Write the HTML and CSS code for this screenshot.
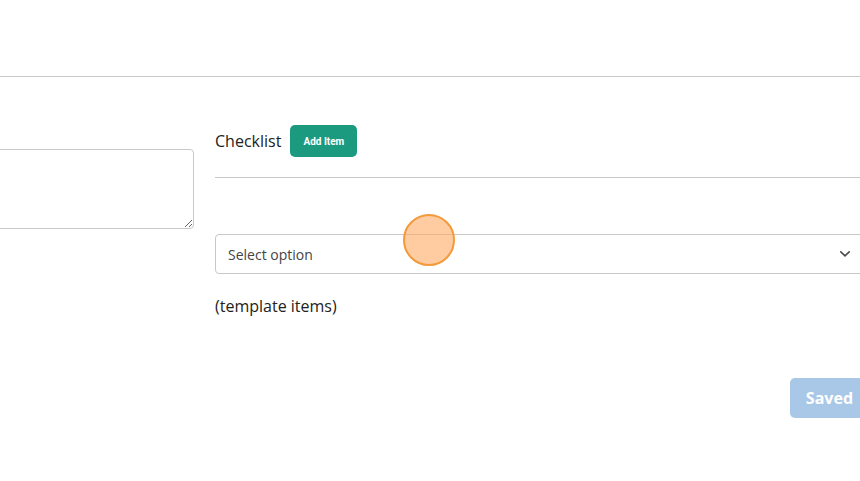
FILE: index.html
```html
<!DOCTYPE html>
<html lang="en">
<head>
    <meta charset="UTF-8">
    <meta name="viewport" content="width=device-width, initial-scale=1.0">
    <title>Task Template</title>
    <link rel="stylesheet" href="styles.css">
</head>
<body>
    <!-- top bar, empty at this scroll position -->
    <header class="topbar"></header>

    <main class="editor">
        <div class="form-grid">
            <!-- left column: description -->
            <section class="col-left">
                <textarea class="notes"></textarea>
            </section>

            <!-- right column: checklist -->
            <section class="col-right">
                <div class="checklist-head">
                    <span class="checklist-title">Checklist</span>
                    <button class="btn-add" type="button">Add Item</button>
                </div>
                <hr class="divider">

                <div class="select-box">
                    <span class="select-text">Select option</span>
                    <svg class="chevron" width="12" height="8" viewBox="0 0 12 8">
                        <path d="M1.8 1.8 L6 5.8 L10.2 1.8" fill="none" stroke="#4a4a4a" stroke-width="1.6" stroke-linecap="round" stroke-linejoin="round"/>
                    </svg>
                </div>

                <p class="template-items">(template items)</p>
            </section>
        </div>

        <div class="actions">
            <button class="btn-saved" type="button" disabled>Saved</button>
        </div>
    </main>

    <!-- click marker -->
    <div class="click-dot"></div>
</body>
</html>
```

FILE: styles.css
```css
body {
    font-family: "Open Sans", "Noto Sans", Arial, sans-serif;
    margin: 0;
    padding: 0;
    background: #fff;
    color: #222;
    overflow: hidden;
    height: 481px;
    position: relative;
}

.topbar {
    height: 76px;
    border-bottom: 1px solid #c8c8c8;
}

.editor {
    margin-left: -200px;
    width: 1069px;
}

.form-grid {
    display: grid;
    grid-template-columns: 394px 651px;
    column-gap: 21px;
}

.col-left {
    padding-top: 72px;
}

.notes {
    display: block;
    width: 100%;
    height: 80px;
    box-sizing: border-box;
    border: 1px solid #c8c8c8;
    border-radius: 4px;
    resize: vertical;
    font-family: inherit;
}

.col-right {
    padding-top: 48px;
}

.checklist-head {
    display: flex;
    align-items: center;
    gap: 9px;
    height: 32px;
}

.checklist-title {
    font-size: 16px;
    color: #222;
}

.btn-add {
    background: #1b9a80;
    color: #fff;
    border: none;
    border-radius: 5px;
    height: 32px;
    width: 67px;
    padding: 0;
    font-family: Roboto, "Noto Sans", sans-serif;
    font-weight: 700;
    font-size: 10px;
    cursor: pointer;
}

.divider {
    border: none;
    border-top: 1px solid #c8c8c8;
    margin: 20px 0 0 0;
}

.select-box {
    margin-top: 56px;
    height: 40px;
    box-sizing: border-box;
    border: 1px solid #c8c8c8;
    border-radius: 4px;
    display: flex;
    align-items: center;
    justify-content: space-between;
    padding: 0 14px 0 12px;
}

.select-text {
    font-size: 14px;
    color: #444;
}

.template-items {
    margin: 20px 0 0 0;
    font-size: 16px;
    line-height: 24px;
    color: #222;
}

.actions {
    display: flex;
    justify-content: flex-end;
    margin-top: 60px;
}

.btn-saved {
    background: #a9c7e7;
    color: #fff;
    border: none;
    border-radius: 5px;
    height: 40px;
    padding: 0 16px;
    font-family: inherit;
    font-weight: 700;
    font-size: 16px;
}

.click-dot {
    position: absolute;
    left: 403px;
    top: 214px;
    width: 48px;
    height: 48px;
    border-radius: 50%;
    background: rgba(255, 170, 100, 0.6);
    border: 2px solid #f39a3b;
}
```
